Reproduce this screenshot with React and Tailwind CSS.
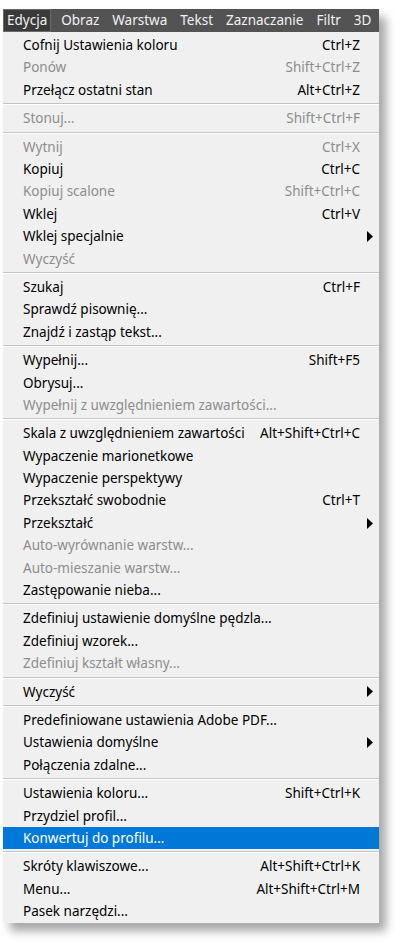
const menuBar = ["Edycja", "Obraz", "Warstwa", "Tekst", "Zaznaczanie", "Filtr", "3D"];

const S = "sep";

const items = [
  { label: "Cofnij Ustawienia koloru", key: "Ctrl+Z" },
  { label: "Ponów", key: "Shift+Ctrl+Z", off: true },
  { label: "Przełącz ostatni stan", key: "Alt+Ctrl+Z" },
  S,
  { label: "Stonuj...", key: "Shift+Ctrl+F", off: true },
  S,
  { label: "Wytnij", key: "Ctrl+X", off: true },
  { label: "Kopiuj", key: "Ctrl+C" },
  { label: "Kopiuj scalone", key: "Shift+Ctrl+C", off: true },
  { label: "Wklej", key: "Ctrl+V" },
  { label: "Wklej specjalnie", sub: true },
  { label: "Wyczyść", off: true },
  S,
  { label: "Szukaj", key: "Ctrl+F" },
  { label: "Sprawdź pisownię..." },
  { label: "Znajdź i zastąp tekst..." },
  S,
  { label: "Wypełnij...", key: "Shift+F5" },
  { label: "Obrysuj..." },
  { label: "Wypełnij z uwzględnieniem zawartości...", off: true },
  S,
  { label: "Skala z uwzględnieniem zawartości", key: "Alt+Shift+Ctrl+C" },
  { label: "Wypaczenie marionetkowe" },
  { label: "Wypaczenie perspektywy" },
  { label: "Przekształć swobodnie", key: "Ctrl+T" },
  { label: "Przekształć", sub: true },
  { label: "Auto-wyrównanie warstw...", off: true },
  { label: "Auto-mieszanie warstw...", off: true },
  { label: "Zastępowanie nieba..." },
  S,
  { label: "Zdefiniuj ustawienie domyślne pędzla..." },
  { label: "Zdefiniuj wzorek..." },
  { label: "Zdefiniuj kształt własny...", off: true },
  S,
  { label: "Wyczyść", sub: true },
  S,
  { label: "Predefiniowane ustawienia Adobe PDF..." },
  { label: "Ustawienia domyślne", sub: true },
  { label: "Połączenia zdalne..." },
  S,
  { label: "Ustawienia koloru...", key: "Shift+Ctrl+K" },
  { label: "Przydziel profil..." },
  { label: "Konwertuj do profilu...", active: true },
  S,
  { label: "Skróty klawiszowe...", key: "Alt+Shift+Ctrl+K" },
  { label: "Menu...", key: "Alt+Shift+Ctrl+M" },
  { label: "Pasek narzędzi..." },
];

function Arrow() {
  return (
    <svg width="6" height="11" viewBox="0 0 6 11" className="block">
      <path d="M0 0 L6 5.5 L0 11 Z" fill="#000" />
    </svg>
  );
}

function Row({ item }) {
  const color = item.active
    ? "text-white"
    : item.off
    ? "text-[#8d8d8d]"
    : "text-black";
  return (
    <div
      className={`flex h-[22.4px] items-center pl-[20px] pr-[19px] ${color} ${
        item.active ? "bg-[#0078d7]" : ""
      }`}
    >
      <span className="flex-1 whitespace-nowrap">{item.label}</span>
      {item.key && <span className="whitespace-nowrap">{item.key}</span>}
      {item.sub && (
        <span className="mr-[-13px]">
          <Arrow />
        </span>
      )}
    </div>
  );
}

export default function App() {
  return (
    <div
      className="h-[948px] w-[406px] bg-white pl-[3px] pt-[9px]"
      style={{ fontFamily: '"Noto Sans", "Open Sans", sans-serif' }}
    >
      <div className="w-[376px] shadow-[7px_8px_9px_rgba(0,0,0,0.35)]">
        {/* menu bar */}
        <div className="flex h-[23px] items-stretch bg-[#535353] text-[13.5px] text-[#f2f2f2]">
          {menuBar.map((m, i) => (
            <div
              key={m}
              className={`flex items-center ${
                i === 0
                  ? "border border-[#6a6a6a] bg-[#3a3a3a] px-[3px]"
                  : "ml-[7px] px-[3px]"
              }`}
            >
              {m}
            </div>
          ))}
        </div>

        {/* dropdown */}
        <div className="bg-[#f0f0f0] pb-[1px] pt-[2px] text-[13.5px]">
          {items.map((it, i) =>
            it === S ? (
              <div key={i} className="flex h-[6px] flex-col justify-center">
                <div className="h-px bg-[#c4c4c4]" />
                <div className="h-px bg-white" />
              </div>
            ) : (
              <Row key={i} item={it} />
            )
          )}
        </div>
      </div>
    </div>
  );
}
